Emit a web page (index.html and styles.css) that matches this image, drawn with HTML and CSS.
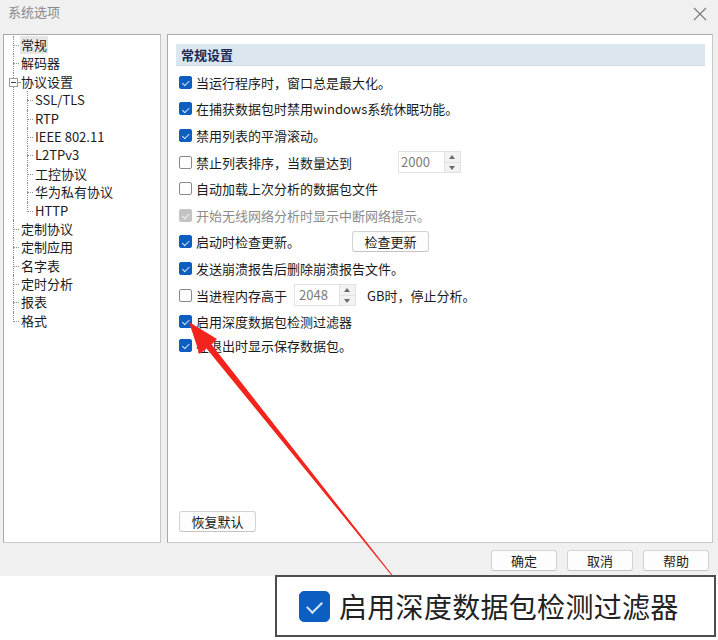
FILE: index.html
```html
<!DOCTYPE html>
<html lang="zh">
<head>
<meta charset="utf-8">
<title>系统选项</title>
<link rel="stylesheet" href="styles.css">
</head>
<body>
<div class="dialog">
  <div class="titlebar">
    <span class="title">系统选项</span>
    <svg class="close" width="14" height="14" viewBox="0 0 14 14"><path d="M1 1 L13 13 M13 1 L1 13" stroke="#7a7a7a" stroke-width="1.1" fill="none"/></svg>
  </div>
  <div class="main">
    <div class="panel tree-panel">
      <ul class="tree">
        <li><span class="label sel">常规</span></li>
        <li><span class="label">解码器</span></li>
        <li class="open"><span class="toggle"></span><span class="label">协议设置</span>
          <ul class="tree sub">
            <li><span class="label">SSL/TLS</span></li>
            <li><span class="label">RTP</span></li>
            <li><span class="label">IEEE 802.11</span></li>
            <li><span class="label">L2TPv3</span></li>
            <li><span class="label">工控协议</span></li>
            <li><span class="label">华为私有协议</span></li>
            <li><span class="label">HTTP</span></li>
          </ul>
        </li>
        <li><span class="label">定制协议</span></li>
        <li><span class="label">定制应用</span></li>
        <li><span class="label">名字表</span></li>
        <li><span class="label">定时分析</span></li>
        <li><span class="label">报表</span></li>
        <li><span class="label">格式</span></li>
      </ul>
    </div>
    <div class="panel settings">
      <div class="section-head">常规设置</div>
      <div class="rows">
        <div class="row"><span class="cb on"></span><span>当运行程序时，窗口总是最大化。</span></div>
        <div class="row"><span class="cb on"></span><span>在捕获数据包时禁用windows系统休眠功能。</span></div>
        <div class="row"><span class="cb on"></span><span>禁用列表的平滑滚动。</span></div>
        <div class="row"><span class="cb"></span><span>禁止列表排序，当数量达到</span>
          <span class="spin spin-a"><span class="spin-val">2000</span><span class="spin-btns"><span class="up"></span><span class="down"></span></span></span>
        </div>
        <div class="row"><span class="cb"></span><span>自动加载上次分析的数据包文件</span></div>
        <div class="row disabled"><span class="cb on dis"></span><span>开始无线网络分析时显示中断网络提示。</span></div>
        <div class="row"><span class="cb on"></span><span>启动时检查更新。</span><button class="btn btn-check">检查更新</button></div>
        <div class="row"><span class="cb on"></span><span>发送崩溃报告后删除崩溃报告文件。</span></div>
        <div class="row"><span class="cb"></span><span>当进程内存高于</span>
          <span class="spin spin-b"><span class="spin-val">2048</span><span class="spin-btns"><span class="up"></span><span class="down"></span></span></span>
          <span class="after-spin">GB时，停止分析。</span>
        </div>
        <div class="row"><span class="cb on"></span><span>启用深度数据包检测过滤器</span></div>
        <div class="row last"><span class="cb on"></span><span>在退出时显示保存数据包。</span></div>
      </div>
      <div class="restore"><button class="btn btn-restore">恢复默认</button></div>
    </div>
  </div>
  <div class="footer">
    <button class="btn btn-foot">确定</button>
    <button class="btn btn-foot">取消</button>
    <button class="btn btn-foot">帮助</button>
  </div>
</div>

<div class="callout">
  <span class="cb on big"></span>
  <span class="callout-text">启用深度数据包检测过滤器</span>
</div>

<svg class="arrow" width="718" height="640" viewBox="0 0 718 640">
  <polygon points="189,322 217,339 211.5,344.5 392.4,575 391.6,575.4 206.5,348.5 199.5,354" fill="#f3241b"/>
</svg>
</body>
</html>
```
FILE: styles.css
```css
* { box-sizing: border-box; }
html, body { margin: 0; padding: 0; background: #ffffff; }
body {
  width: 718px;
  height: 640px;
  position: relative;
  overflow: hidden;
  font-family: "Noto Sans CJK SC", "Noto Sans", sans-serif;
  font-size: 13px;
  color: #1b1b1b;
}

.dialog {
  width: 718px;
  height: 576px;
  background: #f0f0f0;
  display: flex;
  flex-direction: column;
}

.titlebar {
  height: 34px;
  display: flex;
  justify-content: space-between;
  align-items: flex-start;
  padding: 2px 11px 0 8px;
}
.title { color: #8a8a8a; font-size: 13px; line-height: 20px; }
.close { margin-top: 5px; }

.main {
  display: flex;
  gap: 6px;
  padding: 0 5px 0 3px;
  height: 509px;
}
.panel {
  background: #ffffff;
  border: 1px solid #a9a9a9;
  border-right-color: #c8c8c8;
  border-bottom-color: #c8c8c8;
}
.tree-panel { width: 158px; padding-top: 1px; }
.settings {
  flex: 1;
  padding: 9px 7px 10px 8px;
  display: flex;
  flex-direction: column;
}

/* tree */
.tree { list-style: none; margin: 0; padding: 0; line-height: 18.4px; }
.tree li { position: relative; display: block; line-height: 18.4px; }
.tree li::before {
  content: "";
  position: absolute;
  left: 9px;
  top: 0;
  bottom: 0;
  border-left: 1px dotted #8f8f8f;
}
.tree li:last-child::before { bottom: auto; height: 10px; }
.tree li::after {
  content: "";
  position: absolute;
  left: 9px;
  top: 9px;
  width: 6px;
  border-top: 1px dotted #8f8f8f;
}
.tree .label {
  display: block;
  width: max-content;
  height: 18.4px;
  line-height: 18.4px;
  margin-left: 16px;
  padding: 0 1px;
  white-space: nowrap;
  color: #1b1b1b;
}
.tree .label.sel { background: #e6e6e6; }
.tree.sub { padding-left: 14px; }
.toggle {
  position: absolute;
  left: 5px;
  top: 5px;
  width: 9px;
  height: 9px;
  border: 1px solid #9a9a9a;
  background: #fff;
  z-index: 1;
}
.toggle::after {
  content: "";
  position: absolute;
  left: 1px;
  top: 3px;
  width: 5px;
  border-top: 1px solid #444;
}
.tree li.open::after { left: 14px; width: 2px; }

/* settings */
.section-head {
  height: 22px;
  line-height: 22px;
  background: #dce6ee;
  border-bottom: 1px solid #cfd9e2;
  color: #1c2a57;
  font-weight: 700;
  padding-left: 5px;
  flex: none;
}
.rows { padding-top: 3px; padding-left: 3px; }
.row {
  height: 26.6px;
  display: flex;
  align-items: center;
  white-space: nowrap;
}
.row.last { margin-top: -3px; }
.row.disabled { color: #8c8c8c; }

.cb {
  width: 13px;
  height: 13px;
  border: 1px solid #8a8a8a;
  border-radius: 2px;
  background: #fdfdfd;
  margin-right: 4px;
  flex: none;
  position: relative;
}
.cb.on {
  background: #0c5fc0;
  border-color: #0c5fc0;
}
.cb.on::after {
  content: "";
  position: absolute;
  left: 3.5px;
  top: 2.2px;
  width: 3px;
  height: 5.5px;
  border-right: 1px solid #d8e6f7;
  border-bottom: 1px solid #d8e6f7;
  transform: rotate(45deg);
}
.cb.on.dis { background: #c4c4c4; border-color: #c4c4c4; }
.cb.on.dis::after { border-color: #f4f4f4; }

.spin {
  display: inline-flex;
  height: 22px;
  border: 1px solid #e2e2e2;
  background: #fff;
}
.spin-a { width: 63px; margin-left: 46px; }
.spin-b { width: 62px; margin-left: 7px; }
.spin-val {
  flex: 1;
  color: #7c7c7c;
  font-size: 13px;
  line-height: 20px;
  padding-left: 2px;
}
.spin-b .spin-val { padding-left: 4px; }
.spin-btns {
  width: 16px;
  display: flex;
  flex-direction: column;
  background: #f2f2f2;
  border-left: 1px solid #e2e2e2;
}
.spin-btns span { flex: 1; position: relative; }
.spin-btns .up { border-bottom: 1px solid #e2e2e2; }
.spin-btns .up::after, .spin-btns .down::after {
  content: "";
  position: absolute;
  left: 4px;
  width: 0;
  height: 0;
  border-left: 3.5px solid transparent;
  border-right: 3.5px solid transparent;
}
.spin-btns .up::after { top: 3px; border-bottom: 4px solid #6a6a6a; }
.spin-btns .down::after { top: 3px; border-top: 4px solid #6a6a6a; }
.after-spin { margin-left: 11px; }

.btn {
  font-family: "Noto Sans CJK SC", "Noto Sans", sans-serif;
  font-size: 13px;
  color: #1b1b1b;
  background: #fdfdfd;
  border: 1px solid #d3d3d3;
  border-bottom-color: #c4c4c4;
  border-radius: 3px;
  height: 21px;
  padding: 0;
  line-height: 19px;
}
.btn-check { width: 77px; margin-left: 52px; }
.restore { margin-top: auto; padding-left: 3px; }
.btn-restore { width: 77px; }

.footer {
  display: flex;
  justify-content: flex-end;
  gap: 10px;
  padding: 7px 9px 0 0;
}
.btn-foot { width: 66px; }

/* callout */
.callout {
  position: absolute;
  left: 275px;
  top: 575px;
  width: 441px;
  height: 62px;
  background: #fff;
  border: 2px solid #4d4d4d;
  display: flex;
  align-items: center;
  padding-left: 22px;
}
.cb.big {
  width: 31px;
  height: 31px;
  border-radius: 5px;
  margin-right: 9px;
}
.cb.big::after {
  left: 10px;
  top: 6px;
  width: 7px;
  height: 13px;
  border-right-width: 2px;
  border-bottom-width: 2px;
}
.callout-text {
  font-size: 28px;
  color: #222;
  line-height: 40px;
  letter-spacing: 0.3px;
}

.arrow {
  position: absolute;
  left: 0;
  top: 0;
  pointer-events: none;
}
```
